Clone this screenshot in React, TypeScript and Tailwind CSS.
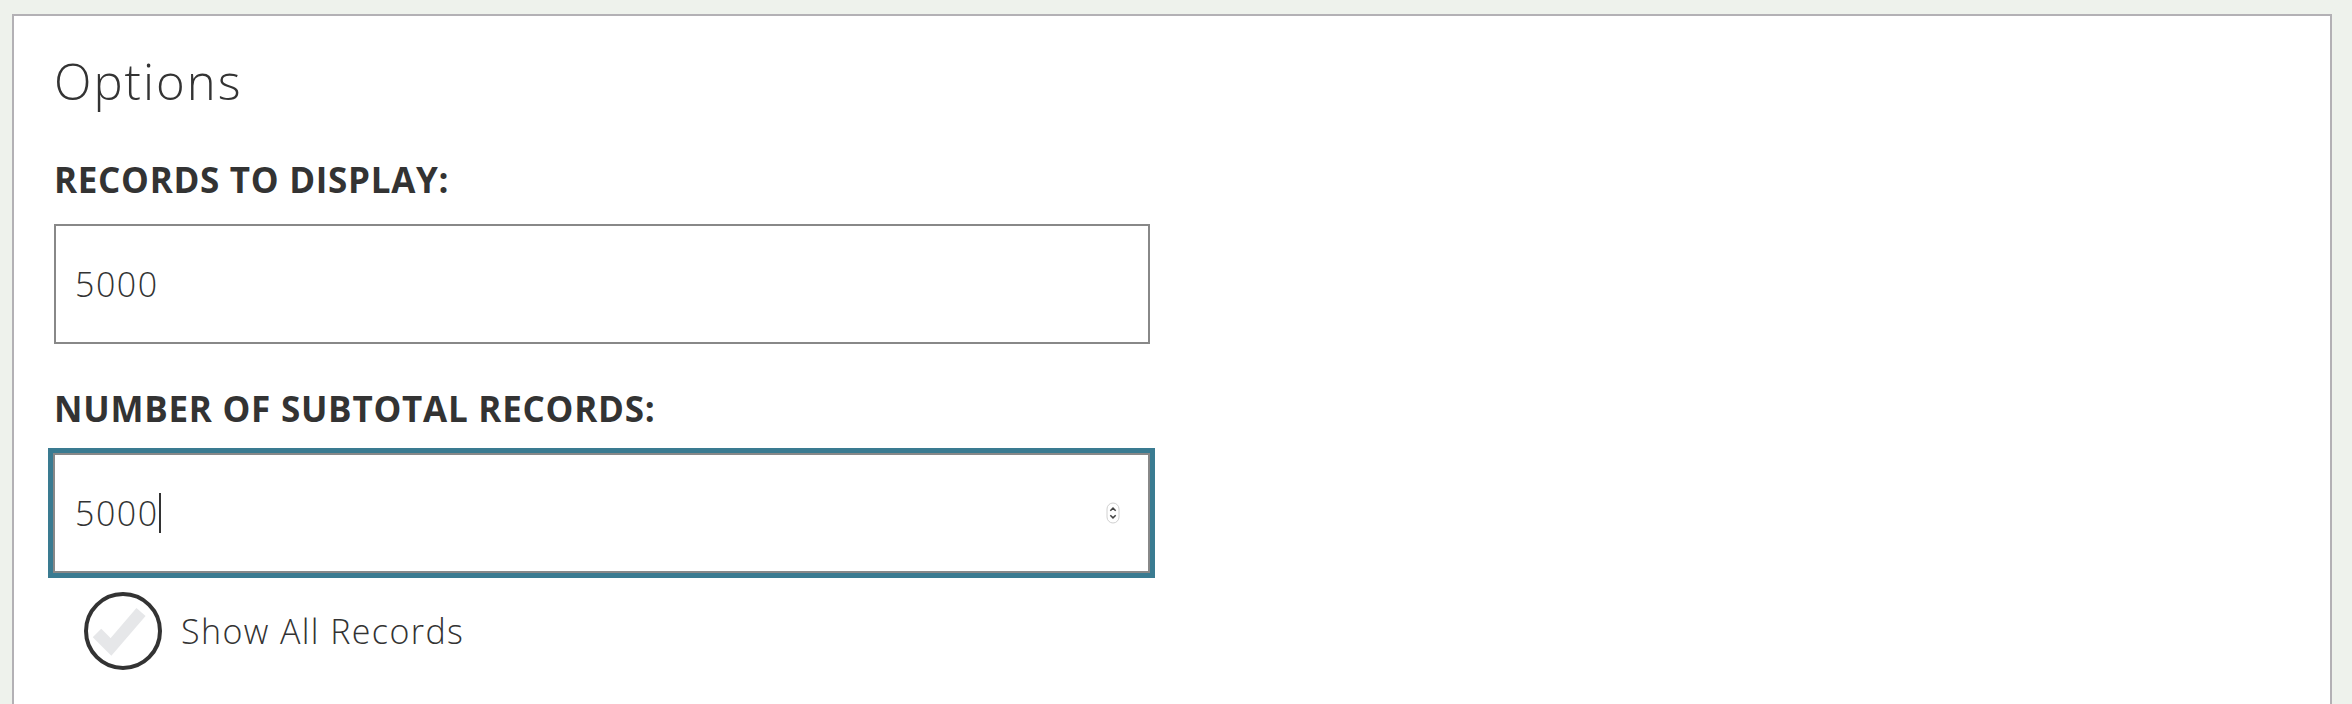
import React from "react";

const font = { fontFamily: '"Open Sans", "Noto Sans", sans-serif' };

function CheckCircle() {
  return (
    <svg width="80" height="80" viewBox="0 0 80 80" className="shrink-0">
      <path
        d="M14 42 L28 56 L58 21"
        fill="none"
        stroke="#e6e7e9"
        strokeWidth="12"
        strokeLinejoin="miter"
      />
      <circle cx="40" cy="40" r="37" fill="none" stroke="#333333" strokeWidth="4" />
    </svg>
  );
}

function Spinner() {
  return (
    <svg width="14" height="22" viewBox="0 0 14 22" className="absolute right-[28px] top-1/2 -translate-y-1/2">
      <rect x="1" y="1" width="12" height="20" rx="6" fill="#fff" stroke="#d0d0d0" />
      <path d="M4.3 8.8 L7 6.1 L9.7 8.8" fill="none" stroke="#444" strokeWidth="1.5" />
      <path d="M4.3 13.2 L7 15.9 L9.7 13.2" fill="none" stroke="#444" strokeWidth="1.5" />
    </svg>
  );
}

export default function App() {
  return (
    <div className="min-h-screen bg-[#eef2ec] pt-[14px] pl-[12px] pr-[20px] overflow-hidden" style={font}>
      <div className="h-[720px] border-2 border-b-0 border-[#b3b1b5] bg-white pl-[40px] text-[#333333]">
        <h2 className="mt-[41px] text-[49px] leading-[48px] font-light tracking-[2px]">Options</h2>

        <label className="mt-[57px] block text-[35px] leading-[35px] font-bold tracking-[0.7px]">RECORDS TO DISPLAY:</label>
        <div className="mt-[27px] flex h-[120px] w-[1096px] items-center border-2 border-[#888888] px-[19px] text-[34px] font-light tracking-[1.5px]">
          5000
        </div>

        <label className="mt-[47px] block text-[35px] leading-[35px] font-bold tracking-[0.75px]">NUMBER OF SUBTOTAL RECORDS:</label>
        <div className="relative mt-[27px] flex h-[120px] w-[1097px] -ml-px items-center border-2 border-[#888888] px-[20px] text-[34px] font-light tracking-[1.5px] outline-[5px] outline-solid outline-[#3a7b91]">
          <span>5000</span>
          <span className="inline-block h-[40px] w-[2px] bg-[#333333]" />
          <Spinner />
        </div>

        <label className="mt-[18px] ml-[29px] flex items-center gap-[18px]">
          <CheckCircle />
          <span className="text-[34px] font-light tracking-[1.4px]">Show All Records</span>
        </label>
      </div>
    </div>
  );
}
